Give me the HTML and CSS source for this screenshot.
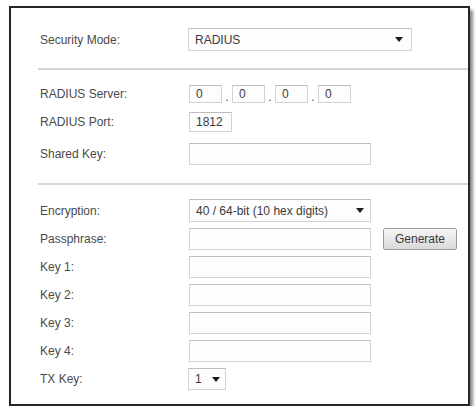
FILE: index.html
```html
<!DOCTYPE html>
<html>
<head>
  <title>Wireless Security</title>
  <link rel="stylesheet" href="styles.css">
</head>
<body>
  <div class="panel">
    <div class="row row-mode">
      <span class="label">Security Mode:</span>
      <div class="select select-mode"><span>RADIUS</span><i class="arrow"></i></div>
    </div>
    <div class="divider"></div>

    <div class="row row-server">
      <span class="label">RADIUS Server:</span>
      <div class="ip">
        <div class="box box-ip">0</div><span class="dot">.</span>
        <div class="box box-ip">0</div><span class="dot">.</span>
        <div class="box box-ip">0</div><span class="dot">.</span>
        <div class="box box-ip">0</div>
      </div>
    </div>
    <div class="row row-port">
      <span class="label">RADIUS Port:</span>
      <div class="box box-port">1812</div>
    </div>
    <div class="row row-shared">
      <span class="label">Shared Key:</span>
      <div class="box box-wide"></div>
    </div>
    <div class="divider divider-2"></div>

    <div class="row row-enc">
      <span class="label">Encryption:</span>
      <div class="select select-enc"><span>40 / 64-bit (10 hex digits)</span><i class="arrow"></i></div>
    </div>
    <div class="row row-key">
      <span class="label">Passphrase:</span>
      <div class="box box-wide"></div>
      <button class="btn">Generate</button>
    </div>
    <div class="row row-key">
      <span class="label">Key 1:</span>
      <div class="box box-wide"></div>
    </div>
    <div class="row row-key">
      <span class="label">Key 2:</span>
      <div class="box box-wide"></div>
    </div>
    <div class="row row-key">
      <span class="label">Key 3:</span>
      <div class="box box-wide"></div>
    </div>
    <div class="row row-key">
      <span class="label">Key 4:</span>
      <div class="box box-wide"></div>
    </div>
    <div class="row row-key">
      <span class="label">TX Key:</span>
      <div class="select select-tx"><span>1</span><i class="arrow"></i></div>
    </div>
  </div>
</body>
</html>
```

FILE: styles.css
```css
body {
  margin: 0;
  background: #ffffff;
  font-family: "Liberation Sans", Arial, sans-serif;
  font-size: 12px;
  color: #4a4a4a;
}
.panel {
  box-sizing: border-box;
  width: 461px;
  height: 400px;
  margin: 6px 0 0 9px;
  padding: 0 0 0 29px;
  background: #ffffff;
  border: 2px solid #262626;
  box-shadow: 3px 4px 3px #8a8a8a;
  display: flex;
  flex-direction: column;
}
.row {
  display: flex;
  align-items: center;
}
.label {
  width: 149px;
  flex-shrink: 0;
}
.row-mode {
  margin-top: 20px;
  height: 23px;
}
.divider {
  margin-top: 17px;
  margin-left: -2px;
  border-top: 2px solid #d6d6d6;
}
.divider-2 {
  margin-top: 18px;
}
.row-server {
  margin-top: 15px;
  height: 18px;
}
.row-port {
  margin-top: 9px;
  height: 20px;
}
.row-shared {
  margin-top: 11px;
  height: 22px;
}
.row-enc {
  margin-top: 14px;
  height: 23px;
}
.row-key {
  margin-top: 6px;
  height: 22px;
}
.box,
.select {
  box-sizing: border-box;
  height: 100%;
  border: 1px solid #d2d2d2;
  border-top-color: #bdbdbd;
  background: #fdfdfd;
  padding: 0 6px;
  display: flex;
  align-items: center;
  color: #3a3a3a;
}
.box-ip {
  width: 33px;
}
.dot {
  width: 10px;
  text-align: center;
  align-self: flex-end;
  line-height: 12px;
}
.ip {
  display: flex;
  height: 100%;
}
.box-port {
  width: 43px;
}
.box-wide {
  width: 182px;
}
.select {
  justify-content: space-between;
}
.select-mode {
  width: 224px;
  margin-left: -1px;
  padding-right: 8px;
}
.select-enc {
  width: 182px;
  padding-right: 6px;
}
.select-tx {
  width: 38px;
  margin-left: -1px;
  padding-right: 5px;
}
.arrow {
  width: 0;
  height: 0;
  border-left: 4px solid transparent;
  border-right: 4px solid transparent;
  border-top: 5px solid #1e1e1e;
}
.btn {
  margin-left: 12px;
  width: 74px;
  height: 22px;
  font-family: "Liberation Sans", Arial, sans-serif;
  font-size: 12px;
  color: #3a3a3a;
  border: 1px solid #9a9a9a;
  border-radius: 2px;
  background: linear-gradient(#f6f6f6, #d9d9d9);
  padding: 0;
}
```
